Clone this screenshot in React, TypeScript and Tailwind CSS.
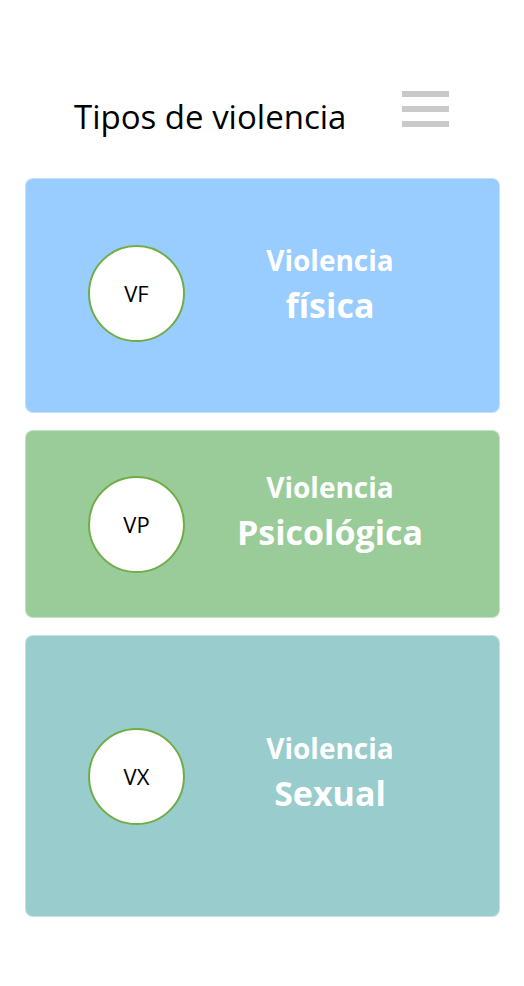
const cards = [
  { code: 'VF', title: 'física', bg: 'bg-[#99ccff]', h: 'h-[235px]', text: '-mt-[22px]', circle: '-mt-[4px]' },
  { code: 'VP', title: 'Psicológica', bg: 'bg-[#99cc99]', h: 'h-[188px]', text: '-mt-[24px]', circle: '' },
  { code: 'VX', title: 'Sexual', bg: 'bg-[#99cccc]', h: 'h-[282px]', text: '-mt-[6px]', circle: '' },
];

export default function App() {
  return (
    <div className="w-[524px] h-[986px] bg-white font-['Open_Sans',sans-serif]">
      {/* Cabecera */}
      <div className="flex items-start pt-[91px] pl-[74px] pr-[75px] h-[178px]">
        <h1 className="flex-1 text-[33px] leading-none text-black mt-[9px]">Tipos de violencia</h1>
        <div className="flex flex-col gap-[9px] w-[47px]">
          <span className="h-[6px] bg-[#c9c9c9]" />
          <span className="h-[6px] bg-[#c9c9c9]" />
          <span className="h-[6px] bg-[#c9c9c9]" />
        </div>
      </div>

      {/* Tarjetas */}
      <div className="flex flex-col gap-[17px] ml-[25px] w-[475px]">
        {cards.map((c) => (
          <div
            key={c.code}
            className={`${c.bg} ${c.h} rounded-lg border border-white/40 flex items-center`}
          >
            <div className={`ml-[62px] w-[97px] h-[97px] rounded-full bg-white border-2 border-[#70ad47] flex items-center justify-center text-[22px] text-black ${c.circle}`}>
              {c.code}
            </div>
            <div className={`flex-1 flex flex-col items-center text-white font-bold ml-[-24px] ${c.text}`}>
              <span className="text-[28px] leading-[34px] mb-[6px]">Violencia</span>
              <span className="text-[34px] leading-[44px]">{c.title}</span>
            </div>
          </div>
        ))}
      </div>
    </div>
  );
}
